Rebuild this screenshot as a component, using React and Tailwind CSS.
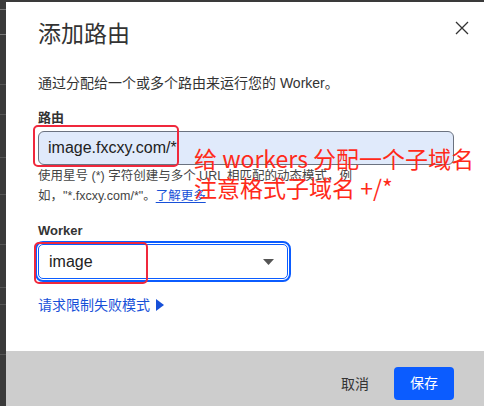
import React from 'react';

const font = { fontFamily: '"Liberation Sans", "Noto Sans CJK SC", sans-serif' };

export default function App() {
  const lines = [82, 112, 155, 192, 242, 285, 302, 352];

  return (
    <div className="relative flex h-[406px] w-[484px] overflow-hidden bg-[#3a3a3a] pt-[2px] text-[#333]" style={font}>
      {/* background page strip */}
      <div className="relative w-[6px] shrink-0">
        <div className="absolute left-0 top-[7px] w-[6px] border-t border-dashed border-[#777]" />
        <div className="absolute left-0 top-[32px] w-[6px] border-t border-dashed border-[#777]" />
        {lines.map((y) => (
          <div key={y} className="absolute left-0 w-[6px] border-t border-[#555]" style={{ top: y }} />
        ))}
      </div>

      {/* dialog */}
      <div className="flex flex-1 flex-col bg-white">
        <div className="flex-1 pl-[32px] pr-[30px]">
          <div className="flex items-start justify-between pt-[16px]">
            <h1 className="text-[23px] leading-[32px] text-[#333]">添加路由</h1>
            <button className="mr-[-16px] mt-[2px] text-[#333]">
              <svg width="16" height="16" viewBox="0 0 16 16" fill="none" stroke="currentColor" strokeWidth="1.3">
                <path d="M2 2L14 14M14 2L2 14" />
              </svg>
            </button>
          </div>

          <p className="mt-[23px] text-[14px] leading-[20px] text-[#333]">通过分配给一个或多个路由来运行您的 Worker。</p>

          <div className="mt-[16px] text-[13px] font-bold leading-[18px] text-[#333]">路由</div>
          <div className="mt-[4px] flex h-[34px] items-center rounded-[6px] border border-[#6b7280] bg-[#e0eafb] pl-[9px] text-[16px] text-[#222]">
            image.fxcxy.com/*
          </div>
          <p className="mt-[1px] text-[12.5px] leading-[20px] text-[#444]">
            使用星号 (*) 字符创建与多个 URL 相匹配的动态模式，例
            <br />
            如，"*.fxcxy.com/*"。<span className="text-[#1750d8] underline underline-offset-2">了解更多</span>
          </p>

          <div className="mt-[16px] text-[13px] font-bold leading-[18px] text-[#333]">Worker</div>
          <div className="mt-[4px] flex h-[35px] w-[250px] items-center justify-between rounded-[5px] border border-[#0b5cff] pl-[10px] pr-[13px] text-[16px] text-[#222] outline-2 outline-offset-1 outline-[#0b5cff]">
            <span>image</span>
            <svg width="11" height="6" viewBox="0 0 11 6">
              <path d="M0 0H11L5.5 6Z" fill="#555" />
            </svg>
          </div>

          <div className="mt-[16px] flex items-center gap-[6px] text-[14px] leading-[20px] text-[#1750d8]">
            <span>请求限制失败模式</span>
            <svg width="8" height="12" viewBox="0 0 8 12">
              <path d="M0 0L8 6L0 12Z" fill="#1750d8" />
            </svg>
          </div>
        </div>

        <div className="flex h-[55px] shrink-0 items-start justify-end gap-[25px] bg-[#cdcdcd] pr-[30px] pt-[16px]">
          <button className="mt-[8px] text-[14px] leading-[18px] text-[#333]">取消</button>
          <button className="h-[33px] w-[60px] rounded-[4px] bg-[#0b5cff] text-[14px] text-white">保存</button>
        </div>
      </div>

      {/* annotations */}
      <div className="pointer-events-none absolute left-[33px] top-[125px] h-[42px] w-[146px] rounded-[5px] border-2 border-[#f0283c]" />
      <div className="pointer-events-none absolute left-[34px] top-[242px] h-[42px] w-[114px] rounded-[5px] border-2 border-[#f0283c]" />
      <div className="pointer-events-none absolute left-[194px] top-[144px] text-[23px] leading-[29px] text-[#ff2a1a]" style={{ fontFamily: '"Noto Sans CJK SC", "Liberation Sans", sans-serif' }}>
        给 workers 分配一个子域名
        <br />
        注意格式子域名 +/*
      </div>
    </div>
  );
}
